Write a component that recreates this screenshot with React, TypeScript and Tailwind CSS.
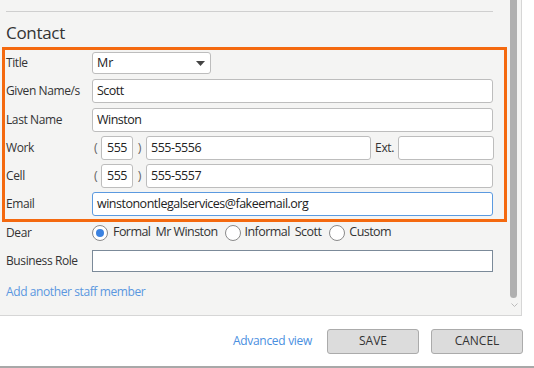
import React from "react";

const font = { fontFamily: '"Open Sans", "Noto Sans", sans-serif' };

function Input({ value, className = "", focused = false }: { value?: string; className?: string; focused?: boolean }) {
  return (
    <div
      className={`h-[24px] bg-white rounded-[3px] border flex items-center px-[4px] text-[12.5px] tracking-[-0.5px] text-[#222] whitespace-nowrap overflow-hidden ${
        focused ? "border-[#5b9ae0]" : "border-[#bdbdbd]"
      } ${className}`}
    >
      {value}
    </div>
  );
}

function Radio({ checked }: { checked?: boolean }) {
  return (
    <div className="w-[16px] h-[16px] rounded-full border border-[#8a8a8a] bg-white flex items-center justify-center shrink-0">
      {checked && <div className="w-[8px] h-[8px] rounded-full bg-[#3b82e0]" />}
    </div>
  );
}

function Label({ children }: { children: React.ReactNode }) {
  return <div className="w-[87px] shrink-0 pl-[1px] text-[12px] tracking-[-0.4px] text-[#333]">{children}</div>;
}

export default function App() {
  return (
    <div className="w-[534px] h-[368px] bg-white flex flex-col overflow-hidden" style={font}>
      <div className="flex h-[316px]">
        <div className="w-[522px] h-[316px] bg-[#f4f4f3] border-r border-b border-[#d6d6d6] flex">
          <div className="flex-1 relative">
            <div className="ml-[6px] mt-[11px] w-[487px] h-px bg-[#cfcfcf]" />
            <div className="ml-[6px] mt-[9px] text-[17px] leading-[24px] tracking-[-0.3px] text-[#333]">Contact</div>
            <div className="ml-[2px] mt-[2px] w-[505px] border-[3px] border-[#f4690f] pt-[2px] pb-[3px]">
              <div className="flex items-center h-[22px]">
                <Label>Title</Label>
                <div className="w-[119px] h-[22px] bg-white rounded-[3px] border border-[#bdbdbd] flex items-center justify-between px-[4px] text-[12.5px] text-[#222]">
                  <span>Mr</span>
                  <svg width="9" height="5" viewBox="0 0 9 5" className="mr-[1px]">
                    <path d="M0 0 L9 0 L4.5 5 Z" fill="#444" />
                  </svg>
                </div>
              </div>
              <div className="flex items-center mt-[5px]">
                <Label>Given Name/s</Label>
                <Input value="Scott" className="w-[401px]" />
              </div>
              <div className="flex items-center mt-[5px]">
                <Label>Last Name</Label>
                <Input value="Winston" className="w-[401px]" />
              </div>
              <div className="flex items-center mt-[4px]">
                <Label>Work</Label>
                <span className="text-[12.5px] text-[#666] w-[9px] pl-[2px]">(</span>
                <Input value="555" className="w-[32px] justify-center !px-0" />
                <span className="text-[12.5px] text-[#666] w-[13px] text-center">)</span>
                <Input value="555-5556" className="w-[225px]" />
                <span className="text-[12px] tracking-[-0.4px] text-[#333] w-[27px] text-center">Ext.</span>
                <Input className="w-[96px]" />
              </div>
              <div className="flex items-center mt-[4px]">
                <Label>Cell</Label>
                <span className="text-[12.5px] text-[#666] w-[9px] pl-[2px]">(</span>
                <Input value="555" className="w-[32px] justify-center !px-0" />
                <span className="text-[12.5px] text-[#666] w-[13px] text-center">)</span>
                <Input value="555-5557" className="w-[347px]" />
              </div>
              <div className="flex items-center mt-[4px]">
                <Label>Email</Label>
                <Input value="winstonontlegalservices@fakeemail.org" className="w-[401px]" focused />
              </div>
            </div>
            <div className="flex items-center h-[19px] mt-[1px] ml-[5px] text-[12.5px] tracking-[-0.55px] text-[#333]">
              <Label>Dear</Label>
              <Radio checked />
              <span className="ml-[5px]">Formal</span>
              <span className="ml-[5px]">Mr Winston</span>
              <div className="ml-[7px]">
                <Radio />
              </div>
              <span className="ml-[4px]">Informal</span>
              <span className="ml-[5px]">Scott</span>
              <div className="ml-[8px]">
                <Radio />
              </div>
              <span className="ml-[4px]">Custom</span>
            </div>
            <div className="flex items-center mt-[8px] ml-[5px]">
              <Label>Business Role</Label>
              <div className="w-[401px] h-[22px] bg-white border border-[#7b8a99]" />
            </div>
            <div className="ml-[6px] mt-[11px] text-[12px] tracking-[-0.4px] text-[#5a97e0]">Add another staff member</div>
          </div>
          <div className="w-[15px] flex flex-col items-center pt-0">
            <div className="w-[7px] h-[298px] bg-[#b0b0b0] rounded-b-[4px] ml-[-1px]" />
            <svg width="7" height="4" viewBox="0 0 7 4" className="mt-[5px]">
              <path d="M0.5 0.5 L3.5 3.5 L6.5 0.5" stroke="#bbb" fill="none" strokeWidth="1" />
            </svg>
          </div>
        </div>
      </div>
      <div className="h-[50px] flex items-center justify-end pr-[11px]">
        <span className="text-[12px] tracking-[-0.3px] text-[#4a8fdf] mr-[15px]">Advanced view</span>
        <button className="w-[92px] h-[25px] rounded-[3px] bg-[#dcdcdc] border border-[#ababab] text-[12px] text-[#333]">
          SAVE
        </button>
        <button className="ml-[12px] w-[92px] h-[25px] rounded-[3px] bg-[#dcdcdc] border border-[#ababab] text-[12px] text-[#333]">
          CANCEL
        </button>
      </div>
      <div className="h-[2px] bg-[#a8a8a8]" />
    </div>
  );
}
